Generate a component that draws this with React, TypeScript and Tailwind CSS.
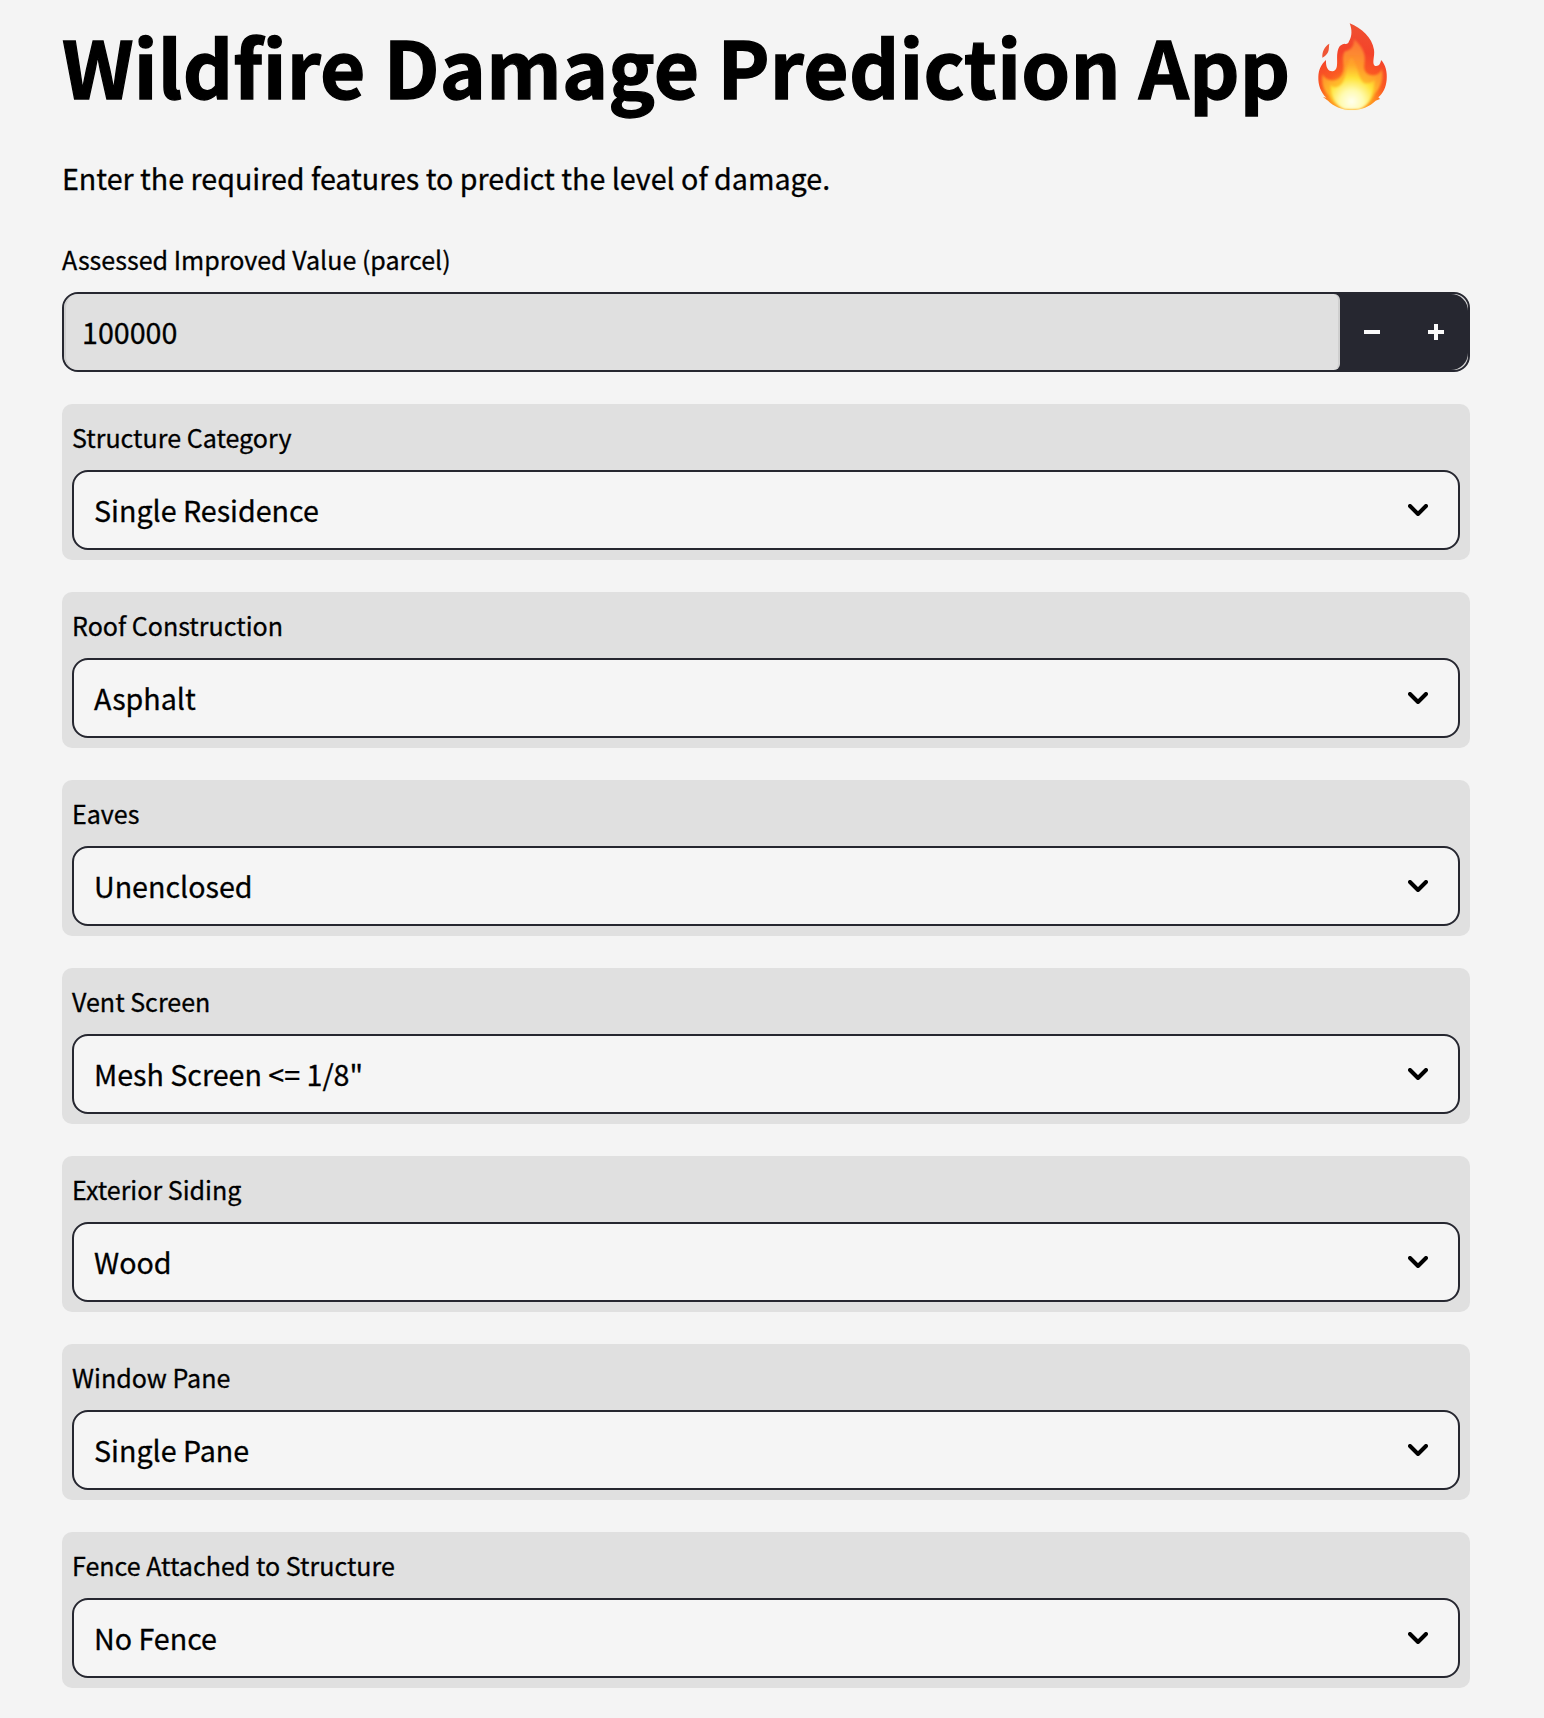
const fields = [
  { label: "Structure Category", value: "Single Residence" },
  { label: "Roof Construction", value: "Asphalt" },
  { label: "Eaves", value: "Unenclosed" },
  { label: "Vent Screen", value: 'Mesh Screen <= 1/8"' },
  { label: "Exterior Siding", value: "Wood" },
  { label: "Window Pane", value: "Single Pane" },
  { label: "Fence Attached to Structure", value: "No Fence" },
];

function Flame() {
  return (
    <svg className="mt-[22px] h-[90px] w-[72px] shrink-0" viewBox="51 36 216 270" aria-label="fire">
      <defs>
        <radialGradient id="outer" gradientUnits="userSpaceOnUse" cx="155" cy="285" r="250">
          <stop offset="0" stopColor="#ffb020" />
          <stop offset="0.25" stopColor="#ff9320" />
          <stop offset="0.42" stopColor="#fb5a22" />
          <stop offset="0.65" stopColor="#f4432a" />
          <stop offset="1" stopColor="#ee5232" />
        </radialGradient>
        <radialGradient id="middle" gradientUnits="userSpaceOnUse" cx="155" cy="280" r="200">
          <stop offset="0" stopColor="#fff59a" />
          <stop offset="0.3" stopColor="#ffc629" />
          <stop offset="0.55" stopColor="#ff9a2a" />
          <stop offset="1" stopColor="#fb7138" />
        </radialGradient>
        <radialGradient id="inner" gradientUnits="userSpaceOnUse" cx="155" cy="275" r="115">
          <stop offset="0" stopColor="#fffff0" />
          <stop offset="0.3" stopColor="#fffbb0" />
          <stop offset="0.62" stopColor="#ffe338" />
          <stop offset="1" stopColor="#ffae28" stopOpacity="0.5" />
        </radialGradient>
        <filter id="soft" x="-20%" y="-20%" width="140%" height="140%">
          <feGaussianBlur stdDeviation="3" />
        </filter>
      </defs>
      <path fill="#ef5535" d="M88 101C74 109 66 124 67 143C74 140 80 134 84 127C88 118 86 109 88 101Z" />
      <path
        fill="url(#outer)"
        d="M149 40C185 55 216 83 222 119C225 138 215 158 224 167C236 170 242 162 243 150C257 163 262 188 260 209C258 232 249 250 235 262L240 267L227 272C210 290 182 300 155 300C126 300 99 288 84 272L69 261L79 263C62 247 54 224 55 200C56 180 63 163 78 150C77 168 82 185 98 184C118 181 109 151 112 130C114 113 119 104 133 101C140 103 145 101 147 94C157 78 156 57 149 40Z"
      />
      <path
        fill="url(#middle)"
        filter="url(#soft)"
        d="M162 88C186 108 199 130 193 163C189 187 205 199 225 195C238 192 243 184 245 176C252 202 244 231 224 251C213 278 188 297 155 297C124 297 98 282 87 257C69 239 63 216 68 192C77 214 111 220 125 196C139 170 121 147 134 124C154 121 163 107 162 88Z"
      />
      <path
        fill="url(#inner)"
        filter="url(#soft)"
        d="M155 142C174 168 174 201 188 216C198 226 214 218 224 210C222 245 211 285 178 297H134C112 288 89 260 92 224C105 239 121 231 130 214C142 192 136 160 155 142Z"
      />
    </svg>
  );
}

function NumberInput() {
  return (
    <div className="flex h-20 overflow-hidden rounded-2xl border-2 border-[#262730] bg-[#d8d8d8]">
      <div className="z-10 flex flex-1 items-center rounded-l-[14px] rounded-r-[6px] border-x-2 border-[#cfcfcf] bg-[#e0e0e0] pl-4 text-[28.64px] leading-[48px]">
        100000
      </div>
      <div className="-ml-2 flex w-[136px] rounded-r-[17px] bg-[#262730] pl-2">
        <button className="flex w-16 items-center justify-center" aria-label="Decrease">
          <span className="h-1 w-4 bg-[#fafafa]" />
        </button>
        <button className="flex w-16 items-center justify-center" aria-label="Increase">
          <svg className="size-4" viewBox="0 0 16 16" fill="#fafafa">
            <path d="M6 0h4v6h6v4h-6v6H6v-6H0V6h6z" />
          </svg>
        </button>
      </div>
    </div>
  );
}

function SelectField({ label, value }: { label: string; value: string }) {
  return (
    <div className="h-[156px] rounded-[10px] bg-[#e0e0e0] p-[10px]">
      <div className="mb-[10px] text-[25.06px] leading-[46px]">{label}</div>
      <div className="flex h-20 items-center justify-between rounded-2xl border-2 border-[#262730] bg-[#f5f5f5] pr-[30px] pl-5">
        <span className="text-[28.64px] leading-[48px]">{value}</span>
        <svg className="h-3 w-5" viewBox="0 0 20 12" fill="none" stroke="#000" strokeWidth="4" strokeLinecap="round" strokeLinejoin="round">
          <path d="M2 2l8 8 8-8" />
        </svg>
      </div>
    </div>
  );
}

export default function App() {
  return (
    <main className="h-[1718px] overflow-hidden bg-[#f4f4f4] pr-[74px] pl-[62px] font-['Noto_Sans_CJK_SC',sans-serif] text-black [-webkit-text-stroke:0.3px_#000]">
      <header className="flex h-[132px] items-start">
        <h1 className="w-[1255px] shrink-0 text-[78.2px] leading-[130px] font-bold tracking-[0.25px] whitespace-nowrap [-webkit-text-stroke:1.3px_#000]">
          Wildfire Damage Prediction App
        </h1>
        <Flame />
      </header>
      <p className="mt-[22px] text-[28.64px] leading-[48px]">
        Enter the required features to predict the level of damage.
      </p>
      <div className="mt-[34px] mb-[10px] text-[25.06px] leading-[46px]">Assessed Improved Value (parcel)</div>
      <NumberInput />
      <div className="mt-8 flex flex-col gap-8">
        {fields.map((field) => (
          <SelectField key={field.label} label={field.label} value={field.value} />
        ))}
      </div>
    </main>
  );
}
